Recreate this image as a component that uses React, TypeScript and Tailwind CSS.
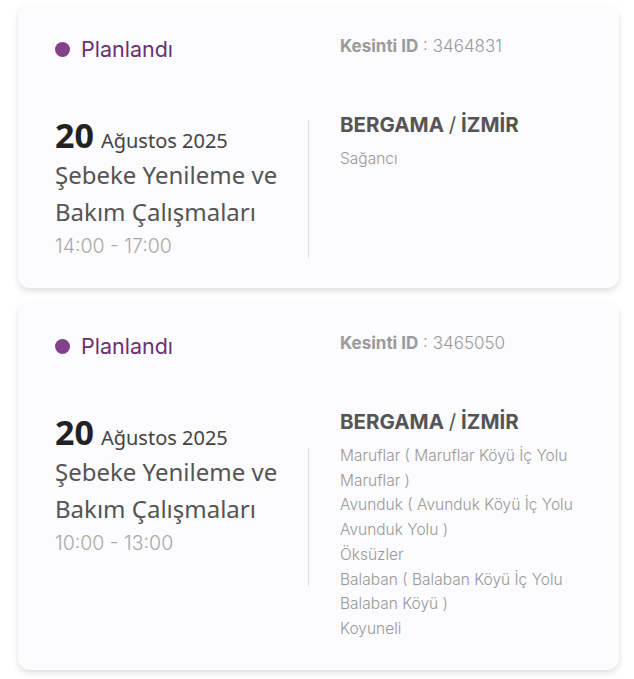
import React from 'react';

type Outage = {
  id: string;
  time: string;
  places: string[];
  dividerClass: string;
};

const outages: Outage[] = [
  { id: '3464831', time: '14:00 - 17:00', places: ['Sağancı'], dividerClass: 'mt-[4px]' },
  {
    id: '3465050',
    time: '10:00 - 13:00',
    places: [
      'Maruflar ( Maruflar Köyü İç Yolu Maruflar )',
      'Avunduk ( Avunduk Köyü İç Yolu Avunduk Yolu )',
      'Öksüzler',
      'Balaban ( Balaban Köyü İç Yolu Balaban Köyü )',
      'Koyuneli',
    ],
    dividerClass: 'mt-[35px]',
  },
];

const geo = { fontFamily: 'Inter, "Liberation Sans", sans-serif' };
const ubu = { fontFamily: '"Noto Sans", "Open Sans", sans-serif' };

const OutageCard: React.FC<{ item: Outage }> = ({ item }) => {
  return (
    <div className="mx-[18px] w-[601px] rounded-xl bg-[#fcfbfd] pt-[30px] pb-[28px] pl-[37px] pr-6 shadow-[0_3px_6px_rgba(0,0,0,0.13)]">
      <div className="flex h-[28px] items-center">
        <div className="flex w-[285px] items-center gap-[11px]">
          <span className="h-[15px] w-[15px] rounded-full bg-[#83408b]" />
          <span style={geo} className="text-[21.5px] leading-[28px] text-[#6d2f72]">
            Planlandı
          </span>
        </div>
        <div style={geo} className="-mt-[4px] text-[17px] text-[#9a9a9a]">
          <span className="font-bold">Kesinti ID</span> <span className="font-light">: {item.id}</span>
        </div>
      </div>

      <div className="mt-[53px] flex items-start">
        <div className="w-[253px]" style={ubu}>
          <div className="flex h-[38px] items-baseline gap-[7px]">
            <span className="text-[34px] font-bold leading-[38px] text-[#222]">20</span>
            <span className="text-[20px] text-[#444]">Ağustos 2025</span>
          </div>
          <div className="mt-[2px] text-[24px] leading-[37px] text-[#555]">
            Şebeke Yenileme ve Bakım Çalışmaları
          </div>
          <div style={geo} className="mt-[2px] text-[19.5px] font-light leading-[28px] text-[#a9a9a9]">
            {item.time}
          </div>
        </div>
        <div className={`h-[138px] w-px bg-[#dcdcdc] ${item.dividerClass}`} />
        <div className="-mt-[5px] flex-1 pl-[31px]" style={geo}>
          <div className="text-[20.5px] font-bold leading-[28px] text-[#555]">
            BERGAMA <span className="font-normal">/</span> İZMİR
          </div>
          <div className="mt-[8px] w-[245px] text-[15.5px] font-light leading-[24.7px] text-[#999]">
            {item.places.map((p) => (
              <div key={p}>{p}</div>
            ))}
          </div>
        </div>
      </div>
    </div>
  );
};

export default function App() {
  return (
    <div className="min-h-[679px] w-[634px] bg-white pt-[5px]">
      <div className="flex flex-col gap-[14px]">
        {outages.map((o) => (
          <OutageCard key={o.id} item={o} />
        ))}
      </div>
    </div>
  );
}
